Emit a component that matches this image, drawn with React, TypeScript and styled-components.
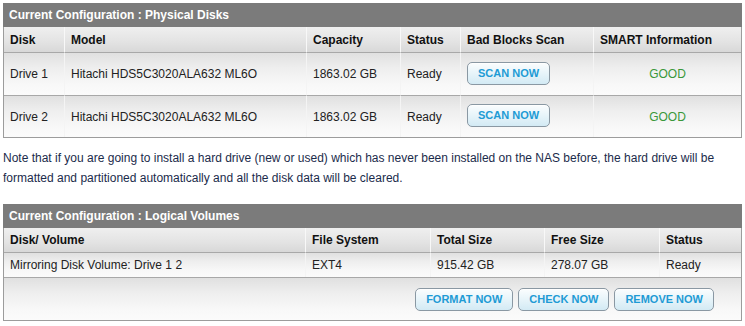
import React from "react";
import styled, { createGlobalStyle } from "styled-components";

const Global = createGlobalStyle`
  html, body { margin: 0; padding: 0; background: #ffffff; }
  body { padding: 3px; font-family: "Liberation Sans", Arial, sans-serif; font-size: 12px; color: #222; }
`;

const Panel = styled.section`
  width: 739px;
  box-sizing: border-box;
  border: 1px solid #9c9c9c;
  border-top: none;
  background: #fff;
`;

const TitleBar = styled.div`
  height: 24px;
  margin: 0 -1px;
  background: #7b7b7b;
  color: #ffffff;
  font-weight: bold;
  font-size: 12px;
  display: flex;
  align-items: center;
  padding: 0 6px;
`;

const Grid = styled.div<{ $cols: string }>`
  display: grid;
  grid-template-columns: ${(p) => p.$cols};
`;

const HeadCell = styled.div<{ $first?: boolean; $h: number }>`
  height: ${(p) => p.$h}px;
  display: flex;
  align-items: center;
  padding: 0 6px;
  font-weight: bold;
  color: #111;
  background: linear-gradient(to bottom, #efefef 0%, #e3e3e3 60%, #d8d8d8 100%);
  border-left: ${(p) => (p.$first ? "none" : "1px solid #f8f8f8")};
  white-space: nowrap;
`;

const Cell = styled.div<{ $first?: boolean; $h: number; $center?: boolean }>`
  height: ${(p) => p.$h}px;
  display: flex;
  align-items: center;
  justify-content: ${(p) => (p.$center ? "center" : "flex-start")};
  padding: 0 6px;
  color: #222;
  border-top: 1px solid #a8a8a8;
  border-left: ${(p) => (p.$first ? "none" : "1px solid #f4f4f4")};
  background: linear-gradient(to bottom, #e0e0e0 0%, #eeeeee 35%, #f8f8f8 75%, #fbfbfb 100%);
  white-space: nowrap;
`;

const Good = styled.span`
  color: #3a983a;
`;

const ActionButton = styled.button`
  height: 23px;
  padding: 0 10px 1px;
  box-sizing: border-box;
  border: 1px solid #8a98a3;
  border-radius: 5px;
  background: linear-gradient(to bottom, #fbfdfe 0%, #e9f5fa 45%, #d3eaf4 100%);
  box-shadow: inset 0 1px 0 #ffffff;
  color: #1e9bd5;
  font-family: "Liberation Sans", Arial, sans-serif;
  font-weight: bold;
  font-size: 11px;
  line-height: 20px;
  cursor: pointer;
  white-space: nowrap;
`;

const ScanWrap = styled.div`
  margin-top: -2px;
`;

const ButtonRow = styled.div`
  height: 42px;
  border-top: 1px solid #a8a8a8;
  background: linear-gradient(to bottom, #e0e0e0 0%, #eeeeee 35%, #f8f8f8 75%, #fbfbfb 100%);
  display: flex;
  align-items: center;
  justify-content: flex-end;
  gap: 5px;
  padding-right: 27px;
`;

const Note = styled.p`
  margin: 10px 0 16px 0;
  line-height: 20px;
  font-size: 12px;
  color: #1b2b4b;
  width: 739px;
`;

const disks = [
  { disk: "Drive 1", model: "Hitachi HDS5C3020ALA632 ML6O", cap: "1863.02 GB", status: "Ready", smart: "GOOD", h: 42 },
  { disk: "Drive 2", model: "Hitachi HDS5C3020ALA632 ML6O", cap: "1863.02 GB", status: "Ready", smart: "GOOD", h: 41 },
];

export default function App() {
  const pcols = "60px 242px 94px 60px 133px 1fr";
  const lcols = "301px 125px 114px 115px 1fr";
  return (
    <>
      <Global />
      <Panel>
        <TitleBar>Current Configuration : Physical Disks</TitleBar>
        <Grid $cols={pcols}>
          <HeadCell $first $h={25}>Disk</HeadCell>
          <HeadCell $h={25}>Model</HeadCell>
          <HeadCell $h={25}>Capacity</HeadCell>
          <HeadCell $h={25}>Status</HeadCell>
          <HeadCell $h={25}>Bad Blocks Scan</HeadCell>
          <HeadCell $h={25}>SMART Information</HeadCell>
          {disks.map((d) => (
            <React.Fragment key={d.disk}>
              <Cell $first $h={d.h}>{d.disk}</Cell>
              <Cell $h={d.h}>{d.model}</Cell>
              <Cell $h={d.h}>{d.cap}</Cell>
              <Cell $h={d.h}>{d.status}</Cell>
              <Cell $h={d.h}>
                <ScanWrap>
                  <ActionButton>SCAN NOW</ActionButton>
                </ScanWrap>
              </Cell>
              <Cell $h={d.h} $center>
                <Good>{d.smart}</Good>
              </Cell>
            </React.Fragment>
          ))}
        </Grid>
      </Panel>
      <Note>
        Note that if you are going to install a hard drive (new or used) which has never been installed on the NAS before, the hard drive will be formatted and partitioned automatically and all the disk data will be cleared.
      </Note>
      <Panel>
        <TitleBar>Current Configuration : Logical Volumes</TitleBar>
        <Grid $cols={lcols}>
          <HeadCell $first $h={24}>Disk/ Volume</HeadCell>
          <HeadCell $h={24}>File System</HeadCell>
          <HeadCell $h={24}>Total Size</HeadCell>
          <HeadCell $h={24}>Free Size</HeadCell>
          <HeadCell $h={24}>Status</HeadCell>
          <Cell $first $h={24}>Mirroring Disk Volume: Drive 1 2</Cell>
          <Cell $h={24}>EXT4</Cell>
          <Cell $h={24}>915.42 GB</Cell>
          <Cell $h={24}>278.07 GB</Cell>
          <Cell $h={24}>Ready</Cell>
        </Grid>
        <ButtonRow>
          <ActionButton>FORMAT NOW</ActionButton>
          <ActionButton>CHECK NOW</ActionButton>
          <ActionButton>REMOVE NOW</ActionButton>
        </ButtonRow>
      </Panel>
    </>
  );
}
